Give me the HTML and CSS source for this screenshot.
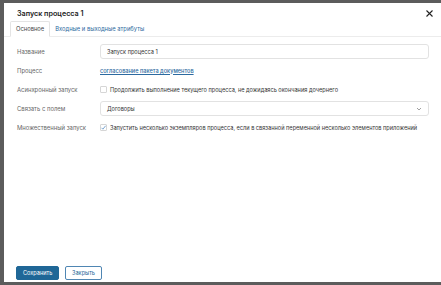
FILE: index.html
```html
<!DOCTYPE html>
<html lang="ru">
<head>
    <meta charset="UTF-8">
    <title>Запуск процесса 1</title>
    <link rel="stylesheet" href="styles.css">
</head>
<body>
    <div class="modal">
        <div class="modal-header">
            <h2>Запуск процесса 1</h2>
            <svg class="close" width="7" height="7" viewBox="0 0 7 7"><path d="M0.5 0.5 L6.5 6.5 M6.5 0.5 L0.5 6.5" stroke="#222" stroke-width="1.1"/></svg>
        </div>
        <div class="tabs">
            <div class="tab active">Основное</div>
            <div class="tab">Входные и выходные атрибуты</div>
        </div>
        <div class="modal-body">
            <div class="row">
                <label>Название</label>
                <div class="field"><div class="input">Запуск процесса 1</div></div>
            </div>
            <div class="row">
                <label>Процесс</label>
                <div class="field"><a href="#">согласование пакета документов</a></div>
            </div>
            <div class="row">
                <label>Асинхронный запуск</label>
                <div class="field check">
                    <span class="box"></span>
                    Продолжить выполнение текущего процесса, не дожидаясь окончания дочернего
                </div>
            </div>
            <div class="row">
                <label>Связать с полем</label>
                <div class="field">
                    <div class="input select">
                        Договоры
                        <svg width="6" height="4" viewBox="0 0 6 4"><path d="M1 1 L3 3 L5 1" fill="none" stroke="#888" stroke-width="0.8"/></svg>
                    </div>
                </div>
            </div>
            <div class="row">
                <label>Множественный запуск</label>
                <div class="field check">
                    <span class="box">
                        <svg width="7" height="7" viewBox="0 0 7 7"><path d="M1.5 3.8 L2.9 5.2 L5.6 1.8" fill="none" stroke="#5b8fc7" stroke-width="0.8"/></svg>
                    </span>
                    Запустить несколько экземпляров процесса, если в связанной переменной несколько элементов приложений
                </div>
            </div>
        </div>
        <div class="modal-footer">
            <button class="btn primary">Сохранить</button>
            <button class="btn">Закрыть</button>
        </div>
    </div>
</body>
</html>
```

FILE: styles.css
```css
* {
    margin: 0;
    padding: 0;
    box-sizing: border-box;
    font-family: 'Inter', 'Liberation Sans', sans-serif;
}

body {
    width: 441px;
    height: 285px;
    background: #5c5c5c;
    padding: 3px 0 3px 4px;
    overflow: hidden;
}

.modal {
    background: #fff;
    height: 279px;
    display: flex;
    flex-direction: column;
}

.modal-header {
    display: flex;
    align-items: center;
    justify-content: space-between;
    padding: 3px 8px 0 13px;
    height: 18px;
}

.modal-header h2 {
    font-size: 7.2px;
    font-weight: 600;
    color: #222;
}

.tabs {
    display: flex;
    padding-left: 6px;
    border-bottom: 1px solid #ececec;
    height: 16px;
}

.tab {
    font-size: 5.8px;
    color: #2c6aa0;
    padding: 0 5px;
    line-height: 15px;
}

.tab.active {
    color: #444;
    border: 1px solid #e4e4e4;
    border-bottom: 1px solid #fff;
    border-radius: 2px 2px 0 0;
    margin-bottom: -1px;
    line-height: 14px;
}

.modal-body {
    flex: 1;
    padding: 5px 12px 0 13px;
}

.row {
    display: flex;
    align-items: center;
    height: 19px;
}

label {
    width: 83px;
    font-size: 5.9px;
    color: #666;
}

.field {
    flex: 1;
    font-size: 5.6px;
    color: #333;
}

.input {
    height: 15px;
    border: 1px solid #e2e2e2;
    border-radius: 3px;
    padding: 0 6px;
    display: flex;
    align-items: center;
    font-size: 5.6px;
    color: #333;
}

.select {
    justify-content: space-between;
}

a {
    color: #2c6aa0;
    font-size: 5.6px;
    font-weight: 500;
}

.check {
    display: flex;
    align-items: center;
    gap: 3px;
}

.box {
    width: 7px;
    height: 7px;
    border: 1px solid #d6d6d6;
    border-radius: 1px;
    display: flex;
    align-items: center;
    justify-content: center;
}

.box svg {
    flex-shrink: 0;
}

.modal-footer {
    display: flex;
    gap: 6px;
    padding: 0 0 2px 12px;
}

.btn {
    height: 14px;
    padding: 0 6px;
    font-size: 5.6px;
    border: 1px solid #4f86b3;
    border-radius: 2px;
    background: #fff;
    color: #1f6797;
}

.btn.primary {
    background: #1f6797;
    border-color: #1f6797;
    color: #fff;
    width: 43px;
}
```
